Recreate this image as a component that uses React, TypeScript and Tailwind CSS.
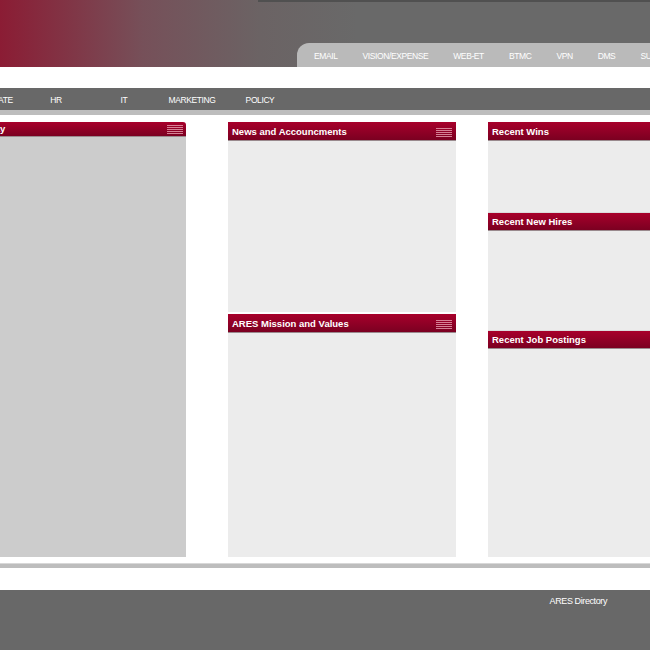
import React from 'react';

const tabs = ['EMAIL', 'VISION/EXPENSE', 'WEB-ET', 'BTMC', 'VPN', 'DMS', 'SUPPORT'];
const navItems = ['CORPORATE', 'HR', 'IT', 'MARKETING', 'POLICY'];

const MenuIcon: React.FC = () => (
  <div className="flex flex-col gap-px w-[16px]">
    {[0, 1, 2, 3, 4].map((i) => (
      <div key={i} className="h-px bg-[#e9a0b0] opacity-80" />
    ))}
  </div>
);

interface PanelHeaderProps {
  title: string;
  menu?: boolean;
  className?: string;
}

const headerFont = { fontFamily: '"Liberation Sans", Arial, sans-serif' };

const PanelHeader: React.FC<PanelHeaderProps> = ({ title, menu, className }) => (
  <div
    className={`flex items-center justify-between px-[4px] pt-[2px] bg-[linear-gradient(to_bottom,#a8002b,#7b0021)] border-b border-[#9a8a8e] text-white text-[9.5px] font-bold whitespace-nowrap ${className ?? 'h-[19px]'}`}
    style={headerFont}
  >
    <span>{title}</span>
    {menu && <MenuIcon />}
  </div>
);

const App: React.FC = () => {
  return (
    <div className="w-[650px] h-[650px] overflow-hidden bg-white flex flex-col" style={{ fontFamily: '"Liberation Sans", Arial, sans-serif' }}>
      {/* top header */}
      <div className="relative h-[67px] bg-[linear-gradient(to_right,#8b1c34_0%,#765059_22%,#6b6364_40%,#696969_55%)] flex items-end justify-end">
        <div className="absolute top-0 left-[258px] right-0 h-[2px] bg-[#505050]" />
        <div className="w-[353px] h-[24px] bg-[#bababa] rounded-tl-[12px] flex items-center pt-[2px] pl-[17px] gap-[25px] overflow-hidden text-white text-[8.5px] tracking-[-0.4px] whitespace-nowrap">
          {tabs.map((t) => (
            <span key={t}>{t}</span>
          ))}
        </div>
      </div>

      <div className="h-[21px]" />

      {/* nav */}
      <div className="h-[22px] bg-[#686868] flex items-center pt-[2px] text-white text-[8.5px] tracking-[-0.4px] whitespace-nowrap">
        <div className="flex -ml-[46px]">
          {navItems.map((n) => (
            <span key={n} className="w-[68px] text-center">{n}</span>
          ))}
        </div>
      </div>
      <div className="h-[5px] bg-[#bdbdbd]" />

      {/* content */}
      <div className="flex pt-[7px] h-[442px] overflow-hidden">
        <div className="w-[186px] shrink-0 flex flex-col">
          <div
            className="h-[15px] rounded-tr-[3px] flex items-center justify-between pr-[3px] bg-[linear-gradient(to_bottom,#a8002b,#7b0021)] border-b border-[#9a8a8e] text-white text-[9.5px] font-bold whitespace-nowrap"
            style={headerFont}
          >
            <span className="-ml-[22px]">Today</span>
            <MenuIcon />
          </div>
          <div className="flex-1 bg-[#cccccc]" />
        </div>

        <div className="w-[228px] shrink-0 flex flex-col ml-[42px]">
          <PanelHeader title="News and Accouncments" menu />
          <div className="h-[171px] bg-[#ececec]" />
          <div className="h-[2px]" />
          <PanelHeader title="ARES Mission and Values" menu />
          <div className="flex-1 bg-[#ececec]" />
        </div>

        <div className="w-[180px] shrink-0 flex flex-col ml-[32px]">
          <PanelHeader title="Recent Wins" />
          <div className="h-[71px] bg-[#ececec]" />
          <PanelHeader title="Recent New Hires" className="h-[19px] border-t border-t-[#dcdcdc]" />
          <div className="h-[99px] bg-[#ececec]" />
          <PanelHeader title="Recent Job Postings" className="h-[19px] border-t border-t-[#dcdcdc]" />
          <div className="flex-1 bg-[#ececec]" />
        </div>
      </div>

      <div className="h-[5px] mt-[6px] bg-[#bdbdbd] border-t border-[#d8d8d8]" />
      <div className="h-[22px]" />

      {/* footer */}
      <div className="flex-1 bg-[#686868] flex justify-end pr-[43px] pt-[5px]">
        <span className="text-white text-[9px] tracking-[-0.4px]">ARES Directory</span>
      </div>
    </div>
  );
};

export default App;
